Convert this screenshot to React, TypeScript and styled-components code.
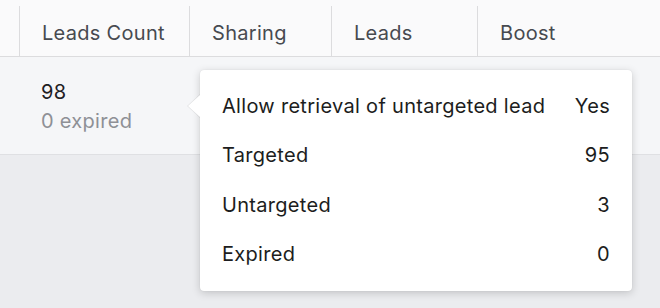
import styled, { createGlobalStyle } from 'styled-components';

const GlobalStyle = createGlobalStyle`
    html, body {
        margin: 0;
        padding: 0;
        background: #ebecef;
        font-family: Inter, "Liberation Sans", Arial, sans-serif;
        letter-spacing: 0.3px;
    }
`;

interface Column {
    label: string;
    width: number;
}

interface Stat {
    label: string;
    value: string;
}

const columns: Column[] = [
    { label: '', width: 19 },
    { label: 'Leads Count', width: 170 },
    { label: 'Sharing', width: 142 },
    { label: 'Leads', width: 146 },
    { label: 'Boost', width: 183 },
];

const stats: Stat[] = [
    { label: 'Allow retrieval of untargeted lead', value: 'Yes' },
    { label: 'Targeted', value: '95' },
    { label: 'Untargeted', value: '3' },
    { label: 'Expired', value: '0' },
];

const Page = styled.div`
    width: 660px;
    height: 308px;
    background: #ebecef;
    overflow: hidden;
`;

const HeaderRow = styled.div`
    display: flex;
    height: 56px;
    background: #fafafb;
    border-bottom: 1px solid #dcdcde;
`;

const HeaderCell = styled.div<{ w: number; first: boolean }>`
    display: flex;
    align-items: center;
    box-sizing: border-box;
    flex: 0 0 ${props => props.w}px;
    padding: 3px 0 0 ${props => props.first ? 0 : 22}px;
    margin-top: 6px;
    font-size: 20px;
    color: #474a50;
    border-left: ${props => props.first ? 'none' : '1px solid #dcdcde'};
`;

const BodyRow = styled.div`
    position: relative;
    display: flex;
    height: 97px;
    background: #f5f6f8;
    border-bottom: 1px solid #dfe0e3;
`;

const CountCell = styled.div`
    display: flex;
    flex-direction: column;
    justify-content: center;
    padding: 3px 0 0 41px;
`;

const Count = styled.div`
    font-size: 20px;
    line-height: 29px;
    color: #1f2023;
`;

const Expired = styled.div`
    font-size: 20px;
    line-height: 29px;
    color: #8e9096;
`;

const Popover = styled.div`
    position: absolute;
    top: 13px;
    left: 200px;
    width: 432px;
    box-sizing: border-box;
    padding: 11px 22px 12px;
    background: #ffffff;
    border-radius: 4px;
    box-shadow: 0 2px 8px rgba(0, 0, 0, 0.18), 0 0 1px rgba(0, 0, 0, 0.12);
    z-index: 2;

    &::before {
        content: '';
        position: absolute;
        left: -13px;
        top: 24px;
        width: 0;
        height: 0;
        border-top: 12px solid transparent;
        border-bottom: 12px solid transparent;
        border-right: 13px solid rgba(0, 0, 0, 0.08);
        filter: blur(0.5px);
    }

    &::after {
        content: '';
        position: absolute;
        left: -12px;
        top: 24px;
        width: 0;
        height: 0;
        border-top: 12px solid transparent;
        border-bottom: 12px solid transparent;
        border-right: 13px solid #ffffff;
    }
`;

const StatRow = styled.div`
    display: flex;
    justify-content: space-between;
    align-items: center;
    height: 49.5px;
    font-size: 20px;
    color: #1c1d20;
`;

const App = () => {
    return (
        <Page>
            <GlobalStyle />
            <HeaderRow>
                {columns.map((col, i) => (
                    <HeaderCell key={i} w={col.width} first={i === 0}>
                        {col.label}
                    </HeaderCell>
                ))}
            </HeaderRow>
            <BodyRow>
                <CountCell>
                    <Count>98</Count>
                    <Expired>0 expired</Expired>
                </CountCell>
                <Popover>
                    {stats.map(stat => (
                        <StatRow key={stat.label}>
                            <span>{stat.label}</span>
                            <span>{stat.value}</span>
                        </StatRow>
                    ))}
                </Popover>
            </BodyRow>
        </Page>
    );
};

export default App;
